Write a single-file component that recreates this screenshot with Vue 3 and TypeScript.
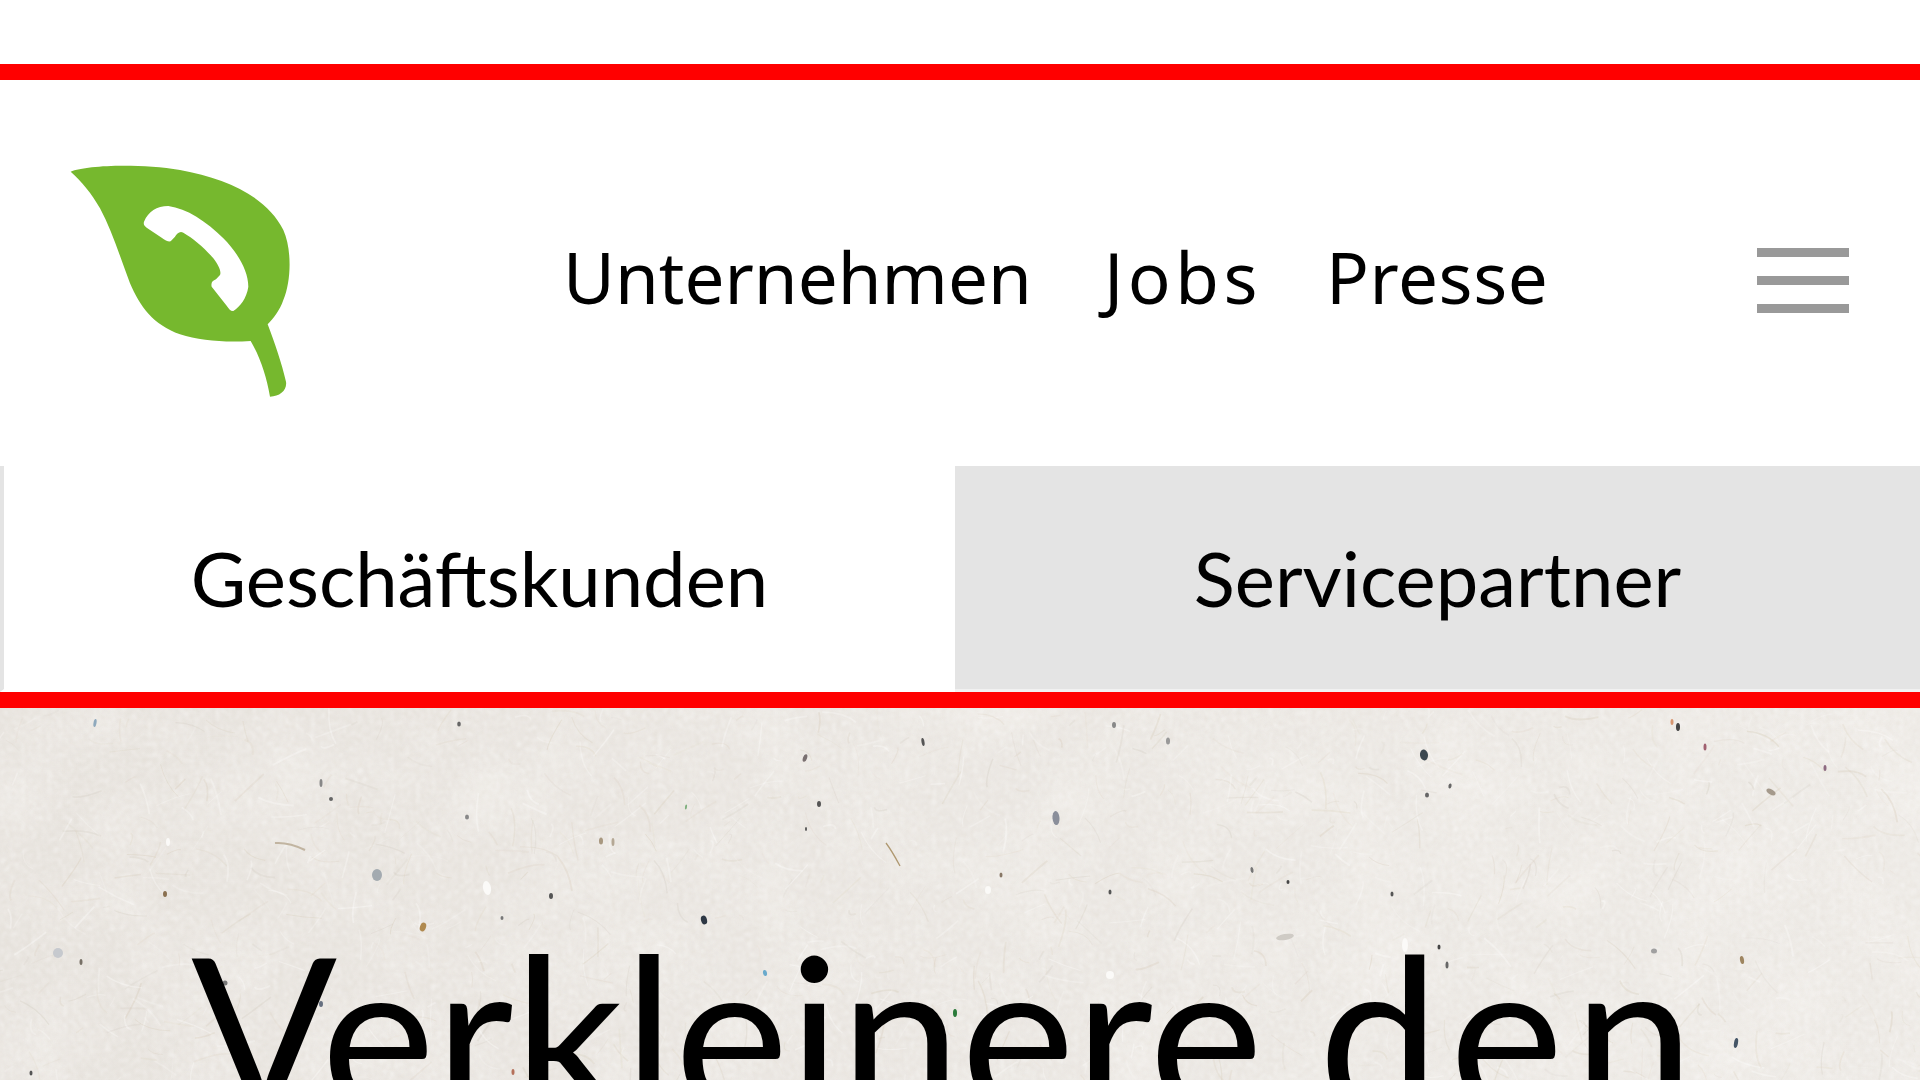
<script setup lang="ts">
interface Speck { x: number; y: number; rx: number; ry: number; c: string; a: number }
interface Fibre { d: string; c: string; o: number; w: number }

const specks: Speck[] = [
  { x: 95, y: 723, rx: 1.5, ry: 4, c: '#8fa9bd', a: 10 },
  { x: 459, y: 724, rx: 1.8, ry: 2.5, c: '#666666', a: 0 },
  { x: 923, y: 742, rx: 1.5, ry: 4, c: '#555555', a: -10 },
  { x: 805, y: 758, rx: 2, ry: 4, c: '#7a7070', a: 20 },
  { x: 321, y: 783, rx: 1.5, ry: 4, c: '#888888', a: 0 },
  { x: 331, y: 799, rx: 2, ry: 2, c: '#666666', a: 0 },
  { x: 819, y: 804, rx: 2, ry: 3, c: '#555555', a: 0 },
  { x: 686, y: 807, rx: 1, ry: 2.5, c: '#7fb07f', a: 10 },
  { x: 467, y: 817, rx: 2, ry: 2.5, c: '#888888', a: 0 },
  { x: 806, y: 829, rx: 1, ry: 2, c: '#555555', a: 0 },
  { x: 601, y: 841, rx: 2, ry: 3.5, c: '#a89880', a: 0 },
  { x: 613, y: 842, rx: 1.5, ry: 4, c: '#b5a895', a: 0 },
  { x: 377, y: 875, rx: 5, ry: 6, c: '#a3aab0', a: 0 },
  { x: 487, y: 888, rx: 4, ry: 7, c: '#fbfaf8', a: -10 },
  { x: 165, y: 894, rx: 2, ry: 3, c: '#8a7050', a: 0 },
  { x: 551, y: 896, rx: 2, ry: 3, c: '#555555', a: 0 },
  { x: 704, y: 920, rx: 3, ry: 4.5, c: '#2f3844', a: -15 },
  { x: 423, y: 927, rx: 3, ry: 4.5, c: '#b08a50', a: 20 },
  { x: 502, y: 918, rx: 1.5, ry: 2, c: '#777777', a: 0 },
  { x: 58, y: 953, rx: 5, ry: 5, c: '#c6c9ce', a: 0 },
  { x: 81, y: 962, rx: 1.5, ry: 3, c: '#776f66', a: 0 },
  { x: 765, y: 973, rx: 2, ry: 3, c: '#6aaacc', a: -10 },
  { x: 225, y: 983, rx: 2.5, ry: 2.5, c: '#777777', a: 0 },
  { x: 321, y: 1004, rx: 2, ry: 3, c: '#667080', a: 0 },
  { x: 31, y: 1073, rx: 1.5, ry: 2.5, c: '#555555', a: 0 },
  { x: 955, y: 1013, rx: 2, ry: 4, c: '#2a7a3a', a: 0 },
  { x: 513, y: 1072, rx: 1.5, ry: 3, c: '#b5705a', a: 0 },
  { x: 1424, y: 755, rx: 4, ry: 5.5, c: '#3a4750', a: -10 },
  { x: 1678, y: 727, rx: 2, ry: 4, c: '#444444', a: 0 },
  { x: 1672, y: 722, rx: 1.5, ry: 3, c: '#d79670', a: 0 },
  { x: 1705, y: 747, rx: 1.5, ry: 3.5, c: '#a06070', a: 0 },
  { x: 1114, y: 725, rx: 2, ry: 3, c: '#888888', a: 0 },
  { x: 1168, y: 741, rx: 2, ry: 3.5, c: '#999999', a: 0 },
  { x: 1450, y: 786, rx: 1.5, ry: 2.5, c: '#666666', a: 15 },
  { x: 1427, y: 795, rx: 2, ry: 2.5, c: '#666666', a: 0 },
  { x: 1056, y: 818, rx: 3.5, ry: 7, c: '#8a8e9a', a: -5 },
  { x: 1825, y: 768, rx: 1.5, ry: 3, c: '#8d6a80', a: 0 },
  { x: 1771, y: 792, rx: 5, ry: 2.5, c: '#a59a8c', a: 30 },
  { x: 1252, y: 870, rx: 1.5, ry: 3, c: '#777777', a: -10 },
  { x: 1288, y: 882, rx: 1.5, ry: 2, c: '#444444', a: 0 },
  { x: 1392, y: 894, rx: 1.5, ry: 2.5, c: '#555555', a: 0 },
  { x: 1110, y: 892, rx: 1.5, ry: 2.5, c: '#555555', a: 0 },
  { x: 1001, y: 875, rx: 1.5, ry: 2.5, c: '#887766', a: 0 },
  { x: 1736, y: 1043, rx: 2, ry: 5, c: '#445566', a: 10 },
  { x: 1742, y: 960, rx: 2, ry: 4, c: '#9e8560', a: -10 },
  { x: 1654, y: 951, rx: 3, ry: 2.5, c: '#a0a0a0', a: 0 },
  { x: 1439, y: 947, rx: 1.5, ry: 2.5, c: '#444444', a: 0 },
  { x: 1447, y: 965, rx: 1.5, ry: 3.5, c: '#666666', a: 0 },
  { x: 1285, y: 937, rx: 9, ry: 3, c: '#cfcbc5', a: -10 },
  { x: 988, y: 890, rx: 3, ry: 4, c: '#fbfaf8', a: 0 },
  { x: 1110, y: 975, rx: 4, ry: 4, c: '#fbfaf8', a: 0 },
  { x: 1405, y: 945, rx: 3, ry: 7, c: '#fbfaf8', a: 0 },
  { x: 168, y: 842, rx: 2, ry: 4, c: '#fbfaf8', a: 0 }
]

let seed = 20240611
function rnd(): number {
  seed = (seed * 1664525 + 1013904223) % 4294967296
  return seed / 4294967296
}

const tints = ['#d2c6b2', '#d8cebd', '#cfc8bc', '#dfd4c2', '#ffffff', '#ffffff', '#ffffff']
const fibres: Fibre[] = []
for (let i = 0; i < 1100; i++) {
  const x = rnd() * 1920
  const y = 708 + rnd() * 372
  const ang = rnd() * Math.PI
  const len = 6 + rnd() * 34
  const dx = Math.cos(ang) * len
  const dy = Math.sin(ang) * len
  const bend = (rnd() - 0.5) * 12
  fibres.push({
    d: `M${x.toFixed(1)} ${y.toFixed(1)}q${(dx / 2 + bend).toFixed(1)} ${(dy / 2 - bend).toFixed(1)} ${dx.toFixed(1)} ${dy.toFixed(1)}`,
    c: tints[Math.floor(rnd() * tints.length)],
    o: 0.12 + rnd() * 0.2,
    w: 0.9 + rnd() * 1
  })
}
const accents: Fibre[] = [
  { d: 'M886 843q6 8 14 23', c: '#a58a5c', o: 0.85, w: 1.3 },
  { d: 'M275 843q14 -1 30 7', c: '#b7a890', o: 0.8, w: 2 }
]
</script>

<template>
  <div class="page">
    <div class="top-space"></div>
    <div class="rule"></div>

    <header class="head">
      <svg class="logo" viewBox="0 0 900 840" role="img" aria-label="Logo">
        <path
          fill="#76b82e"
          d="M92 95C140 75 300 70 420 90C560 115 680 170 730 270C755 325 755 420 730 480C720 510 700 535 683 553C705 610 725 670 738 725C742 750 720 770 690 770C680 710 660 650 632 603C560 608 480 603 420 583C340 555 300 500 270 430C240 350 215 270 180 205C155 160 125 125 92 95Z"
        />
        <path
          fill="#ffffff"
          d="M312 245C325 215 350 198 385 198C440 205 500 245 550 295C590 335 625 390 625 440C620 475 600 500 580 513C572 514 568 508 560 497L515 440C512 428 518 422 528 418L540 405C545 395 535 375 520 355C495 325 460 295 430 278C420 272 410 280 405 290L392 304C385 306 375 300 365 293L320 263C312 257 310 252 312 245Z"
        />
      </svg>
      <nav class="nav">
        <a class="nav-link">Unternehmen</a>
        <a class="nav-link nav-link-jobs">Jobs</a>
        <a class="nav-link nav-link-press">Presse</a>
      </nav>
      <button class="burger" aria-label="Menü">
        <span class="burger-bar"></span>
        <span class="burger-bar"></span>
        <span class="burger-bar"></span>
      </button>
    </header>

    <div class="tabs">
      <div class="tab tab-active">Geschäftskunden</div>
      <div class="tab tab-idle">Servicepartner</div>
    </div>
    <div class="rule"></div>

    <section class="hero">
      <svg class="paper" viewBox="0 708 1920 372" preserveAspectRatio="none" aria-hidden="true">
        <defs>
          <linearGradient id="paperTone" x1="0" y1="0" x2="1" y2="0">
            <stop offset="0" stop-color="#e8e4df" />
            <stop offset="1" stop-color="#eeebe7" />
          </linearGradient>
          <filter id="cloud" x="0" y="0" width="100%" height="100%">
            <feTurbulence type="fractalNoise" baseFrequency="0.012" numOctaves="4" seed="11" />
            <feColorMatrix
              type="matrix"
              values="0 0 0 0 1  0 0 0 0 0.99  0 0 0 0 0.97  1.6 1.6 0 0 -1.4"
            />
          </filter>
          <filter id="mottleDark" x="0" y="0" width="100%" height="100%">
            <feTurbulence type="fractalNoise" baseFrequency="0.24" numOctaves="4" seed="7" />
            <feColorMatrix
              type="matrix"
              values="0 0 0 0 0.70  0 0 0 0 0.63  0 0 0 0 0.53  1.1 1.1 0 0 -0.95"
            />
            <feGaussianBlur stdDeviation="0.8" />
          </filter>
          <filter id="mottleLight" x="0" y="0" width="100%" height="100%">
            <feTurbulence type="fractalNoise" baseFrequency="0.19" numOctaves="4" seed="23" />
            <feColorMatrix
              type="matrix"
              values="0 0 0 0 1  0 0 0 0 1  0 0 0 0 1  1.2 1.2 0 0 -1.05"
            />
            <feGaussianBlur stdDeviation="0.8" />
          </filter>
          <filter id="soft" x="-5%" y="-5%" width="110%" height="110%">
            <feGaussianBlur stdDeviation="0.7" />
          </filter>
        </defs>
        <rect x="0" y="708" width="1920" height="372" fill="url(#paperTone)" />
        <rect x="0" y="708" width="1920" height="372" filter="url(#cloud)" opacity="0.25" />
        <rect x="0" y="708" width="1920" height="372" filter="url(#mottleDark)" opacity="0.3" />
        <rect x="0" y="708" width="1920" height="372" filter="url(#mottleLight)" opacity="0.45" />
        <g filter="url(#soft)">
          <path
            v-for="(f, i) in fibres"
            :key="'f' + i"
            :d="f.d"
            :stroke="f.c"
            :stroke-opacity="f.o"
            :stroke-width="f.w"
            fill="none"
          />
          <path
            v-for="(f, i) in accents"
            :key="'a' + i"
            :d="f.d"
            :stroke="f.c"
            :stroke-opacity="f.o"
            :stroke-width="f.w"
            fill="none"
          />
          <ellipse
            v-for="(s, i) in specks"
            :key="'s' + i"
            :cx="s.x"
            :cy="s.y"
            :rx="s.rx"
            :ry="s.ry"
            :fill="s.c"
            :transform="`rotate(${s.a} ${s.x} ${s.y})`"
          />
        </g>
      </svg>
      <h1 class="title">Verkleinere <span class="title-end">den</span></h1>
    </section>
  </div>
</template>

<style scoped>
.page {
  width: 1920px;
  height: 1080px;
  overflow: hidden;
  background: #ffffff;
  color: #000000;
  display: flex;
  flex-direction: column;
}
.top-space {
  height: 64px;
  flex: none;
}
.rule {
  height: 16px;
  flex: none;
  background: #ff0000;
}
.head {
  height: 386px;
  flex: none;
  display: flex;
  align-items: flex-start;
  padding: 60px 71px 0 40px;
  box-sizing: border-box;
}
.logo {
  width: 300px;
  height: 280px;
  flex: none;
}
.nav {
  display: flex;
  gap: 70px;
  margin-left: 223px;
  margin-top: 87px;
}
.nav-link {
  font-family: "Noto Sans", sans-serif;
  font-size: 71px;
  line-height: 100px;
  color: #000000;
}
.nav-link-jobs {
  letter-spacing: 4.5px;
  margin-left: 2px;
}
.nav-link-press {
  letter-spacing: 0.6px;
  margin-left: -6px;
}
.burger {
  margin-left: auto;
  margin-top: 108px;
  width: 92px;
  height: 65px;
  padding: 0;
  border: 0;
  background: none;
  display: flex;
  flex-direction: column;
  justify-content: space-between;
}
.burger-bar {
  display: block;
  height: 9px;
  background: #999999;
}
.tabs {
  height: 226px;
  flex: none;
  display: flex;
  align-items: stretch;
  font-family: "Lato", sans-serif;
  font-size: 76px;
}
.tab {
  display: flex;
  align-items: center;
  justify-content: center;
  box-sizing: border-box;
}
.tab-active {
  width: 955px;
  border-left: 4px solid #e4e4e4;
  border-bottom: 3px solid #ffffff;
}
.tab-idle {
  flex: 1;
  background: #e4e4e4;
  border-bottom: 3px solid #f1f1f1;
}
.hero {
  flex: 1;
  position: relative;
  overflow: hidden;
  min-height: 0;
}
.paper {
  position: absolute;
  inset: 0;
  width: 100%;
  height: 100%;
  display: block;
}
.title {
  position: relative;
  margin: 0;
  padding: 192px 0 0 191px;
  font-family: "Lato", sans-serif;
  font-weight: 400;
  font-size: 216px;
  line-height: 1.2;
  white-space: nowrap;
  color: #000000;
}
.title-end {
  letter-spacing: 10px;
}
</style>

<style>
html,
body {
  margin: 0;
  overflow: hidden;
}
</style>
